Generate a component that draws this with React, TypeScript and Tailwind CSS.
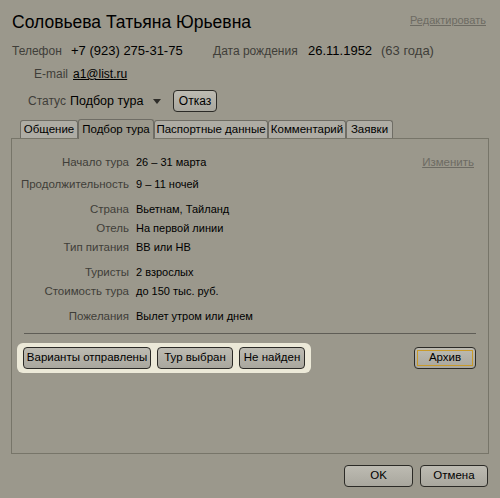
import React from "react";

const font = { fontFamily: '"Liberation Sans", Arial, sans-serif' };

function Btn({ children, className = "" }: { children: React.ReactNode; className?: string }) {
  return (
    <div
      className={
        "flex flex-none items-center justify-center whitespace-nowrap h-[22px] rounded-[4px] border border-[#2b2a26] bg-gradient-to-b from-[#bdbbb2] to-[#a9a79e] text-[11.5px] text-black " +
        className
      }
    >
      {children}
    </div>
  );
}

function Row({ label, value, mt }: { label: string; value: string; mt: string }) {
  return (
    <div className={"flex h-[19px] items-center " + mt}>
      <div className="w-[117px] flex-none text-right text-[11.5px] text-[#3f3e39] whitespace-nowrap">{label}</div>
      <div className="ml-[7px] text-[11px] text-black whitespace-nowrap">{value}</div>
    </div>
  );
}

export default function App() {
  return (
    <div className="w-[500px] h-[498px] bg-[#9b988c] text-[12px] overflow-hidden flex flex-col" style={font}>
      {/* Title */}
      <div className="flex items-end justify-between pl-[12px] pr-[14px] pt-[10px] h-[34px]">
        <div className="text-[17.5px] leading-[24px] text-black whitespace-nowrap">Соловьева Татьяна Юрьевна</div>
        <div className="text-[11px] text-[#6d6b63] underline mb-[6px]">Редактировать</div>
      </div>
      {/* Phone row */}
      <div className="flex items-center h-[18px] mt-[8px] pl-[12px] whitespace-nowrap">
        <span className="flex-none w-[59px] text-[#3f3e39]">Телефон</span>
        <span className="flex-none w-[142px] text-[13px] text-black">+7 (923) 275-31-75</span>
        <span className="flex-none w-[95px] text-[12px] text-[#3f3e39]">Дата рождения</span>
        <span className="flex-none w-[73px] text-[13px] text-black">26.11.1952</span>
        <span className="flex-none text-[13px] text-[#3f3e39]">(63 года)</span>
      </div>
      {/* Email */}
      <div className="flex items-center h-[18px] mt-[5px] pl-[34px]">
        <span className="flex-none w-[39px] text-[#3f3e39]">E-mail</span>
        <span className="text-[12px] text-black underline">a1@list.ru</span>
      </div>
      {/* Status */}
      <div className="flex items-center h-[22px] mt-[7px] pl-[28px] whitespace-nowrap">
        <span className="flex-none w-[42px] text-[#3f3e39]">Статус</span>
        <span className="flex-none w-[83px] text-[12.5px] text-black">Подбор тура</span>
        <svg width="8" height="5" viewBox="0 0 8 5" className="flex-none">
          <polygon points="0,0 8,0 4,5" fill="#2e2d29" />
        </svg>
        <Btn className="ml-[12px] w-[44px] text-[12px]">Отказ</Btn>
      </div>
      {/* Tabs */}
      <div className="flex items-end h-[21px] mt-[5px] pl-[20px]">
        {[
          ["Общение", "w-[58px]", false],
          ["Подбор тура", "w-[76px]", true],
          ["Паспортные данные", "w-[114px]", false],
          ["Комментарий", "w-[78px]", false],
          ["Заявки", "w-[47px]", false],
        ].map(([t, w, active]) => (
          <div
            key={t as string}
            className={
              "flex flex-none items-center justify-center whitespace-nowrap text-[11.5px] rounded-t-[3px] border border-b-0 border-[#6f6d65] text-black " +
              (w as string) +
              (active ? " h-[20px] bg-[#9b988c] -mb-[1px] relative z-10" : " h-[18px] bg-[#aeaca4]")
            }
          >
            {t}
          </div>
        ))}
      </div>
      {/* Panel */}
      <div className="mx-[11px] h-[316px] border border-[#777569] flex flex-col">
        <div className="relative pt-[14px]">
          <div className="absolute right-[14px] top-[14px] h-[19px] flex items-center text-[11.5px] text-[#6d6b63] underline">Изменить</div>
          <Row label="Начало тура" value="26 – 31 марта" mt="" />
          <Row label="Продолжительность" value="9 – 11 ночей" mt="mt-[3px]" />
          <Row label="Страна" value="Вьетнам, Тайланд" mt="mt-[6px]" />
          <Row label="Отель" value="На первой линии" mt="" />
          <Row label="Тип питания" value="BB или HB" mt="" />
          <Row label="Туристы" value="2 взрослых" mt="mt-[6px]" />
          <Row label="Стоимость тура" value="до 150 тыс. руб." mt="" />
          <Row label="Пожелания" value="Вылет утром или днем" mt="mt-[6px]" />
        </div>
        <div className="mx-[12px] mt-[7px] border-t border-[#5f5d56]" />
        <div className="flex items-center mt-[9px] pl-[5px] pr-[12px]">
          <div className="flex gap-[6px] bg-[#ece9d8] rounded-[6px] px-[6px] py-[4px]">
            <Btn className="w-[128px]">Варианты отправлены</Btn>
            <Btn className="w-[76px]">Тур выбран</Btn>
            <Btn className="w-[66px]">Не найден</Btn>
          </div>
          <div className="ml-auto w-[62px] h-[22px] rounded-[4px] border border-[#2b2a26] p-[2px] bg-gradient-to-b from-[#bdbbb2] to-[#a9a79e]">
            <div className="w-full h-full border border-[#c89a2a] flex items-center justify-center text-[11.5px] text-black">Архив</div>
          </div>
        </div>
      </div>
      {/* Bottom buttons */}
      <div className="flex justify-end gap-[7px] pr-[12px] mt-[11px]">
        <Btn className="w-[69px] h-[21px]">OK</Btn>
        <Btn className="w-[68px] h-[21px]">Отмена</Btn>
      </div>
    </div>
  );
}
